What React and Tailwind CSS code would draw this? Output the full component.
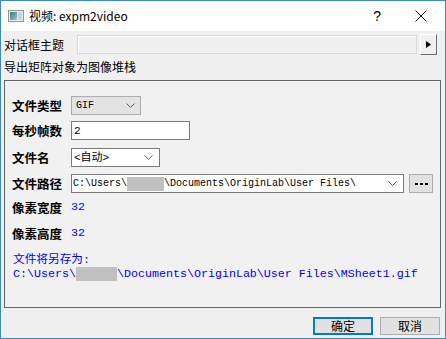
import React from 'react';

const cjk = { fontFamily: '"Noto Sans CJK SC", "Microsoft YaHei", sans-serif' };
const mono = { fontFamily: '"Liberation Mono", "Noto Sans CJK SC", monospace' };

function Chevron() {
  return (
    <svg width="9" height="5" viewBox="0 0 9 5" className="shrink-0">
      <polyline points="0.5,0.5 4.5,4.5 8.5,0.5" fill="none" stroke="#5a5a5a" strokeWidth="1" />
    </svg>
  );
}

function Redacted({ w }) {
  return <span className={`inline-block h-[14px] bg-[#c0c0c0] align-middle ${w}`} />;
}

function Row({ label, children, className = '' }) {
  return (
    <div className={`flex items-center ${className}`}>
      <div className="w-[59px] shrink-0 text-[12.5px] font-bold text-black leading-[16px]" style={cjk}>{label}</div>
      {children}
    </div>
  );
}

export default function App() {
  return (
    <div className="w-[446px] h-[339px] border border-[#3b8cc4] flex flex-col bg-[#f0f0f0] overflow-hidden select-none">
      {/* title bar */}
      <div className="h-[30px] bg-white flex items-center shrink-0">
        <svg width="16" height="12" viewBox="0 0 16 12" className="ml-[7px]">
          <defs>
            <linearGradient id="g1" x1="0" y1="0" x2="1" y2="1">
              <stop offset="0" stopColor="#3d7f64" />
              <stop offset="1" stopColor="#8cc3e0" />
            </linearGradient>
          </defs>
          <rect x="0.5" y="0.5" width="15" height="11" fill="#eef1f4" stroke="#8d949a" />
          <rect x="2" y="2" width="7" height="8" fill="url(#g1)" />
          <rect x="10" y="2" width="4" height="8" fill="#c9d3dc" />
        </svg>
        <span className="ml-[5px] text-[12px] text-black leading-[16px]" style={cjk}>视频: expm2video</span>
        <span className="ml-auto mr-[34px] text-[14px] text-black leading-[16px]" style={{ fontFamily: '"Liberation Sans", sans-serif' }}>?</span>
        <svg width="12" height="12" viewBox="0 0 12 12" className="mr-[18px]">
          <line x1="0.5" y1="0.5" x2="11.5" y2="11.5" stroke="#111" strokeWidth="1" />
          <line x1="11.5" y1="0.5" x2="0.5" y2="11.5" stroke="#111" strokeWidth="1" />
        </svg>
      </div>

      {/* body */}
      <div className="flex-1 flex flex-col px-[3px] pt-[3px]">
        <div className="flex items-center h-[21px]">
          <span className="w-[73px] shrink-0 text-[12px] text-black leading-[16px]" style={cjk}>对话框主题</span>
          <div className="w-[340px] h-[19px] border border-[#d9d9d9] bg-[#f0f0f0] shadow-[inset_1px_1px_0_#ffffff]" />
          <div className="ml-[3px] w-[17px] h-[21px] border border-t-white border-l-white border-r-[#6e6e6e] border-b-[#6e6e6e] bg-[#f0f0f0] flex items-center justify-center">
            <svg width="5" height="7" viewBox="0 0 5 7"><polygon points="0,0 5,3.5 0,7" fill="#000" /></svg>
          </div>
        </div>
        <div className="mt-[4px] h-[16px] text-[12px] text-black leading-[16px]" style={cjk}>导出矩阵对象为图像堆栈</div>

        {/* group box */}
        <div className="mt-[5px] mr-[1px] h-[228px] border border-[#646464] bg-[#f1f1f1] flex flex-col pl-[7px] pt-[15px]">
          <Row label="文件类型">
            <div className="w-[70px] h-[19px] border border-[#adadad] bg-[#e3e3e3] flex items-center justify-between pl-[4px] pr-[5px]">
              <span className="text-[10px] text-black leading-[12px]" style={mono}>GIF</span>
              <Chevron />
            </div>
          </Row>
          <Row label="每秒帧数" className="mt-[6px]">
            <div className="w-[119px] h-[19px] border border-[#7a7a7a] bg-white flex items-center pl-[2px]">
              <span className="text-[11px] text-black leading-[12px]" style={mono}>2</span>
            </div>
          </Row>
          <Row label="文件名" className="mt-[8px]">
            <div className="w-[89px] h-[19px] border border-[#7a7a7a] bg-white flex items-center justify-between pl-[2px] pr-[6px]">
              <span className="text-[11px] text-black leading-[12px]" style={mono}>&lt;自动&gt;</span>
              <Chevron />
            </div>
          </Row>
          <Row label="文件路径" className="mt-[7px]">
            <div className="w-[333px] h-[19px] border border-[#7a7a7a] bg-white flex items-center justify-between pl-[1px] pr-[6px]">
              <span className="flex items-center text-[10px] text-black leading-[12px] whitespace-pre" style={mono}>
                C:\Users\<Redacted w="w-[37px]" />\Documents\OriginLab\User Files\
              </span>
              <Chevron />
            </div>
            <div className="ml-[5px] w-[24px] h-[19px] border border-[#adadad] bg-[#e1e1e1] flex items-center justify-center gap-[2px]">
              <span className="w-[3px] h-[2px] bg-black" />
              <span className="w-[3px] h-[2px] bg-black" />
              <span className="w-[3px] h-[2px] bg-black" />
            </div>
          </Row>
          <Row label="像素宽度" className="mt-[7px]">
            <span className="text-[11.67px] text-[#0000ff] leading-[16px] -mt-[3px]" style={mono}>32</span>
          </Row>
          <Row label="像素高度" className="mt-[10px]">
            <span className="text-[11.67px] text-[#0000ff] leading-[16px] -mt-[3px]" style={mono}>32</span>
          </Row>
          <div className="mt-[11px] ml-[1px] text-[11.67px] text-[#0000ff] leading-[14px]" style={mono}>文件将另存为:</div>
          <div className="ml-[1px] flex items-center text-[11.67px] text-[#0000ff] leading-[14px] whitespace-pre" style={mono}>
            C:\Users\<Redacted w="w-[41px]" />\Documents\OriginLab\User Files\MSheet1.gif
          </div>
        </div>

        {/* buttons */}
        <div className="mt-[9px] flex justify-end gap-[7px] pr-[2px]">
          <button className="w-[60px] h-[18px] border-2 border-[#0078d7] bg-[#e1e1e1] flex items-center justify-center text-[12px] text-black leading-[14px]" style={cjk}>确定</button>
          <button className="w-[60px] h-[18px] border border-[#adadad] bg-[#e1e1e1] flex items-center justify-center text-[12px] text-black leading-[14px]" style={cjk}>取消</button>
        </div>
      </div>
    </div>
  );
}
